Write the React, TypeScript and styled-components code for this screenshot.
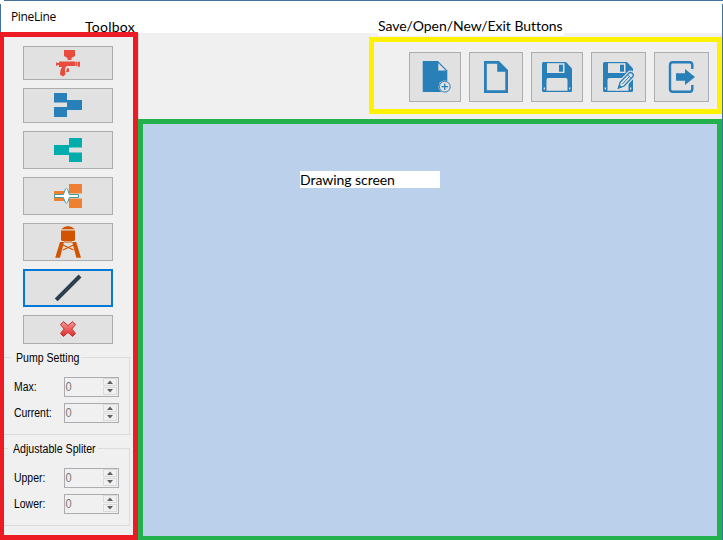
import React from "react";
import styled, { createGlobalStyle } from "styled-components";

const Global = createGlobalStyle`
  * { box-sizing: border-box; }
  body { margin: 0; background: #fff; overflow: hidden; }
`;

const Window = styled.div`
  position: relative;
  width: 723px;
  height: 540px;
  display: grid;
  grid-template-rows: 32px 508px;
  background: #fff;
  color: #000;
  overflow: hidden;
`;

const EdgeTop = styled.div`
  position: absolute;
  top: 0;
  left: 4px;
  right: 0;
  height: 1px;
  background: #41719c;
`;

const EdgeSide = styled.div<{ $right?: boolean }>`
  position: absolute;
  top: 4px;
  bottom: 0;
  ${(p) => (p.$right ? "right: 0;" : "left: 0; bottom: 508px;")}
  width: 1px;
  background: #41719c;
`;

const TitleBar = styled.header`
  display: flex;
  padding: 9px 0 0 11px;
  font: 12px/16px "Open Sans", sans-serif;
  letter-spacing: -0.35px;
  white-space: nowrap;
`;

const Note = styled.div<{ $x: number; $y: number; $w: number; $h: number; $ls: number }>`
  position: absolute;
  left: ${(p) => p.$x}px;
  top: ${(p) => p.$y}px;
  width: ${(p) => p.$w}px;
  height: ${(p) => p.$h}px;
  background: #fff;
  font: 14px/18px Lato, sans-serif;
  letter-spacing: ${(p) => p.$ls}px;
  white-space: nowrap;
`;

const Body = styled.div`
  display: grid;
  grid-template-columns: 138px 584px;
`;

const Toolbox = styled.aside`
  display: flex;
  flex-direction: column;
  background: #f0f0f0;
  border: 5px solid #ed1c24;
  border-left-width: 4px;
  overflow: hidden;
`;

const ToolList = styled.div`
  display: flex;
  flex-direction: column;
  gap: 8px;
  padding: 9px 0 0 19px;
`;

const Button = styled.button<{ $w: number; $h: number; $active?: boolean }>`
  display: flex;
  flex: none;
  width: ${(p) => p.$w}px;
  height: ${(p) => p.$h}px;
  padding: ${(p) => (p.$active ? 0 : 1)}px;
  border: ${(p) => (p.$active ? "2px solid #0078d7" : "1px solid #adadad")};
  background: #e1e1e1;
  svg { display: block; width: 100%; height: 100%; }
`;

const Group = styled.fieldset<{ $top: number; $height: number }>`
  position: relative;
  width: 126px;
  height: ${(p) => p.$height}px;
  margin: ${(p) => p.$top}px 0 0 0;
  padding: 19px 0 0 0;
  border: 1px solid #dcdcdc;
  border-left: 0;
  flex: none;
`;

const Caption = styled.div<{ $x: number; $w: number }>`
  position: absolute;
  top: -7px;
  left: ${(p) => p.$x}px;
  width: ${(p) => p.$w}px;
  padding-left: 5px;
  background: #f0f0f0;
  font: 12px/14px "Liberation Sans", sans-serif;
  white-space: nowrap;
`;

const Condensed = styled.span<{ $scale: number }>`
  display: inline-block;
  transform: scaleX(${(p) => p.$scale});
  transform-origin: 0 50%;
`;

const Field = styled.div`
  display: grid;
  grid-template-columns: 50px 55px;
  height: 20px;
  margin: 0 0 6px 10px;
`;

const Label = styled.label`
  font: 12px/20px "Liberation Sans", sans-serif;
  white-space: nowrap;
`;

const Spinner = styled.div`
  display: flex;
  justify-content: space-between;
  border: 1px solid #abadb3;
  padding: 0 1px 0 0;
  color: #7b7670;
  font: 13px/17px "Liberation Sans", sans-serif;
`;

const Digit = styled.span`
  transform: scaleX(0.85);
`;

const Steps = styled.div`
  display: grid;
  grid-template-rows: 8px 8px;
  row-gap: 1px;
  width: 14px;
  height: 17px;
`;

const Step = styled.span`
  border: 1px solid #dadada;
  svg { display: block; width: 12px; height: 6px; }
`;

const Right = styled.div`
  display: grid;
  grid-template-rows: 87px 421px;
`;

const TopArea = styled.div`
  margin-top: 1px;
  padding: 4px 0 0 230px;
  background: #f0f0f0;
  border-left: 1px solid #d2d2d2;
`;

const Toolbar = styled.nav`
  display: flex;
  gap: 8px;
  width: 353px;
  height: 77px;
  padding: 10px 0 0 35px;
  border: 5px solid #fff200;
`;

const Canvas = styled.main`
  border: 5px solid #22b14c;
  border-bottom-width: 4px;
  background: #bad0eb;
`;

const BLUE = "#2980b9";

const PumpIcon = () => (
  <svg viewBox="25 48 86 30">
    <g fill="#e74c3c">
      <path d="M64 50H75V56L71.5 58V60H67.5V58L64 56Z" />
      <path d="M59 61.5H75.5V66H67L65 68V71L65.5 74.5L63 76.5L60 74.5L60.5 70L62 67H59Z" />
      <rect x="56" y="62.5" width="1.4" height="3.2" />
      <rect x="57" y="63" width="2" height="2" />
      <rect x="76" y="61.7" width="1.4" height="4.5" />
      <rect x="78" y="61.7" width="2" height="5" />
      <path d="M67 68.2H69V71.8L66 72.3Z" />
    </g>
  </svg>
);

const MergeIcon = () => (
  <svg viewBox="25 90 86 31" fill={BLUE}>
    <path d="M54 93H67V100H82V110H67V117H54V107H67V102.6H54Z" />
  </svg>
);

const SplitIcon = () => (
  <svg viewBox="25 133 86 34" fill="#00acac">
    <path d="M54 145H69V138H82V147.5H69V152.4H82V162H69V155H54Z" />
  </svg>
);

const AdjustableIcon = () => (
  <svg viewBox="25 179 86 34">
    <path fill="#ef7f31" d="M54 191H69V184H82V193.5H69V198.4H82V208H69V201H54Z" />
    <path fill="#e1e1e1" d="M69 193.8H82V198.2H69Z" />
    <path
      fill="#fff"
      stroke="#459b9c"
      d="M54.5 194.5H63.4L65.2 189.5L66.4 188.6L67.6 189.5L69.4 194.5H78.5V197.5H69.4L67.6 202.3L66.4 203.2L65.2 202.3L63.4 197.5H54.5Z"
    />
  </svg>
);

const TowerIcon = () => (
  <svg viewBox="25 225 86 34">
    <g fill="#d35400">
      <path d="M61 229.3Q64 226.4 68 226Q72 226.4 75 229.3Z" />
      <path d="M61 230.4H75V240L74 241H62L61 240Z" />
      <path d="M60 242H64L60 257.8H55.2Z" />
      <path d="M72.2 242H76.2L81 257.8H76.4Z" />
    </g>
    <path fill="none" stroke="#d35400" strokeWidth="1.2" d="M63 245L73.5 250M73.5 245L63 250M64 242H72" />
  </svg>
);

const LineIcon = () => (
  <svg viewBox="25 271 86 34">
    <path d="M56.2 299.8L80 276" stroke="#2c3e50" strokeWidth="4" />
  </svg>
);

const DeleteIcon = () => (
  <svg viewBox="25 317 86 25">
    <defs>
      <linearGradient id="del" x1="0" y1="0" x2="0" y2="1">
        <stop offset="0" stopColor="#f4a09d" />
        <stop offset="0.5" stopColor="#e95f5d" />
        <stop offset="1" stopColor="#d92e2e" />
      </linearGradient>
    </defs>
    <path
      d="M63.4 321.6L68 325.6L72.6 321.6L75.5 324.6L71.8 329L75.5 333.4L72.6 336.4L68 332.4L63.4 336.4L60.5 333.4L64.2 329L60.5 324.6Z"
      fill="url(#del)"
      stroke="#c52b2e"
      strokeLinejoin="round"
    />
  </svg>
);

const NewIcon = () => (
  <svg viewBox="411 54 48 46">
    <path fill={BLUE} d="M422.7 61H438L447.3 70.5V92H422.7Z" />
    <path fill="#e1e1e1" d="M438.3 63L445.7 70.6H438.3Z" />
    <circle cx="444.8" cy="86.7" r="6.2" fill="#e1e1e1" />
    <circle cx="444.8" cy="86.7" r="5.4" fill="#e1e1e1" stroke={BLUE} strokeWidth="1" />
    <path stroke={BLUE} strokeWidth="1.3" d="M441.5 86.7H448.1M444.8 83.4V90" />
  </svg>
);

const OpenIcon = () => (
  <svg viewBox="471 54 50 46">
    <path fill={BLUE} fillRule="evenodd" d="M484 61H499L508 70V93H484ZM486.8 63.8V90.3H505.3V71.7H497.2V63.8Z" />
  </svg>
);

const Floppy = ({ x }: { x: number }) => (
  <g transform={`translate(${x} 62)`}>
    <path fill={BLUE} d="M1.5 0H24L30 6.5V28.5Q30 30 28.5 30H1.5Q0 30 0 28.5V1.5Q0 0 1.5 0Z" />
    <rect x="5" y="1.2" width="17.5" height="9.8" fill="#e1e1e1" />
    <rect x="17" y="2.7" width="4" height="7" fill={BLUE} />
    <path d="M4.5 28.8V18Q4.5 16 6.5 16H23.5Q25.5 16 25.5 18V28.8Z" fill="#e1e1e1" />
    <path fill="#e1e1e1" d="M1.7 25.5H3V27.5H1.7ZM27 25.5H28.3V27.5H27Z" />
  </g>
);

const SaveIcon = () => (
  <svg viewBox="533 54 48 46">
    <Floppy x={542} />
  </svg>
);

const SaveAsIcon = () => (
  <svg viewBox="593 54 51 46">
    <Floppy x={603} />
    <path
      d="M618 88.5L620 82L628.8 72.8Q630.5 71.4 632.5 73Q634.6 75 633 77L624.5 86.2Z"
      fill="#e1e1e1"
      stroke="#e1e1e1"
      strokeWidth="3"
    />
    <path
      d="M618.3 88.2L620.2 82.2L629 73.1Q630.5 71.8 632.3 73.3Q634.2 75.2 632.7 76.8L624.1 86Z"
      fill="#e1e1e1"
      stroke={BLUE}
      strokeWidth="1.3"
    />
    <path d="M627.5 74.6L631.2 78.3M622.2 84.2L629.5 76.5" stroke={BLUE} />
    <path d="M618 88.5L619.3 84.4L622.4 87.1Z" fill={BLUE} />
  </svg>
);

const ExitIcon = () => (
  <svg viewBox="656 54 51 46">
    <path
      d="M692.3 69V64.9Q692.3 62.2 689.6 62.2H672.8Q670 62.2 670 65V89Q670 91.8 672.8 91.8H689.6Q692.3 91.8 692.3 89.1V85"
      fill="none"
      stroke={BLUE}
      strokeWidth="2.4"
    />
    <path d="M676 73.2H685V69L695 77L685 85V80.8H676Z" fill={BLUE} />
  </svg>
);

const NumberField = ({ label }: { label: string }) => (
  <Field>
    <Label>
      <Condensed $scale={0.87}>{label}</Condensed>
    </Label>
    <Spinner>
      <Digit>0</Digit>
      <Steps>
        <Step>
          <svg viewBox="0 0 12 6"><path d="M3 5L6 1.5L9 5Z" fill="#606060" /></svg>
        </Step>
        <Step>
          <svg viewBox="0 0 12 6"><path d="M3 1L6 4.5L9 1Z" fill="#606060" /></svg>
        </Step>
      </Steps>
    </Spinner>
  </Field>
);

const tools = [
  { name: "Pump", h: 34, Icon: PumpIcon },
  { name: "Merge", h: 35, Icon: MergeIcon },
  { name: "Split", h: 38, Icon: SplitIcon },
  { name: "Adjustable", h: 38, Icon: AdjustableIcon },
  { name: "Sink", h: 38, Icon: TowerIcon },
  { name: "Line", h: 38, Icon: LineIcon, active: true },
  { name: "Delete", h: 29, Icon: DeleteIcon },
];

const actions = [
  { name: "New", w: 52, Icon: NewIcon },
  { name: "Open", w: 54, Icon: OpenIcon },
  { name: "Save", w: 52, Icon: SaveIcon },
  { name: "Save as", w: 55, Icon: SaveAsIcon },
  { name: "Exit", w: 55, Icon: ExitIcon },
];

export default function App() {
  return (
    <>
      <Global />
      <Window>
        <TitleBar>PineLine</TitleBar>
        <Body>
          <Toolbox>
            <ToolList>
              {tools.map(({ name, h, Icon, active }) => (
                <Button key={name} $w={90} $h={h} $active={active} aria-label={name}>
                  <Icon />
                </Button>
              ))}
            </ToolList>
            <Group $top={13} $height={78}>
              <Caption $x={7} $w={70}>
                <Condensed $scale={0.88}>Pump Setting</Condensed>
              </Caption>
              <NumberField label="Max:" />
              <NumberField label="Current:" />
            </Group>
            <Group $top={13} $height={78}>
              <Caption $x={4} $w={90}>
                <Condensed $scale={0.885}>Adjustable Spliter</Condensed>
              </Caption>
              <NumberField label="Upper:" />
              <NumberField label="Lower:" />
            </Group>
          </Toolbox>
          <Right>
            <TopArea>
              <Toolbar>
                {actions.map(({ name, w, Icon }) => (
                  <Button key={name} $w={w} $h={50} aria-label={name}>
                    <Icon />
                  </Button>
                ))}
              </Toolbar>
            </TopArea>
            <Canvas />
          </Right>
        </Body>
        <EdgeTop />
        <EdgeSide />
        <EdgeSide $right />
        <Note $x={85} $y={18} $w={50} $h={14} $ls={0.25}>Toolbox</Note>
        <Note $x={378} $y={17} $w={186} $h={19} $ls={-0.04}>Save/Open/New/Exit Buttons</Note>
        <Note $x={300} $y={171} $w={140} $h={17} $ls={-0.05}>Drawing screen</Note>
      </Window>
    </>
  );
}
